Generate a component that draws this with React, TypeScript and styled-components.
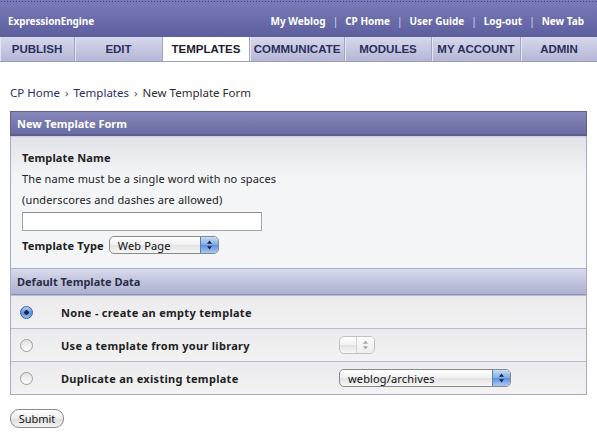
import { Fragment } from "react";
import styled, { createGlobalStyle } from "styled-components";

const GlobalStyle = createGlobalStyle`
  body {
    margin: 0;
    background: #ffffff;
    font-family: "Noto Sans", "DejaVu Sans", sans-serif;
    color: #222222;
  }
`;

const Header = styled.div`
  height: 37px;
  box-sizing: border-box;
  padding-top: 4px;
  background:
    radial-gradient(circle, #3f407a 0.8px, transparent 1px) 0 0 / 3px 3px repeat-x,
    linear-gradient(#7a7bb8, #5d5e9e);
  display: flex;
  align-items: center;
  justify-content: space-between;
  padding-left: 8px;
  padding-right: 13px;
  color: #ffffff;
  font-size: 10px;
  font-weight: bold;
`;

const Brand = styled.div`
  letter-spacing: -0.1px;
`;

const TopLinks = styled.div`
  display: flex;
  gap: 7px;
`;

const TopLink = styled.span`
  color: #ffffff;
`;

const Sep = styled.span`
  color: #d8d9ee;
  font-weight: normal;
`;

const Tabs = styled.div`
  display: flex;
  height: 25px;
  border-bottom: 1px solid #9c9ec0;
  box-sizing: border-box;
`;

const Tab = styled.div<{ $w: number; $active?: boolean }>`
  width: ${(p) => p.$w}px;
  display: flex;
  align-items: center;
  justify-content: center;
  font-family: "Liberation Sans", Arial, sans-serif;
  font-weight: bold;
  font-size: 11.5px;
  color: ${(p) => (p.$active ? "#1c1c2c" : "#2b2e5e")};
  background: ${(p) =>
    p.$active ? "#ffffff" : "linear-gradient(#d6d8ec, #c4c6e0 55%, #b3b6d4)"};
  border-right: 1px solid #a3a5c4;
  box-shadow: ${(p) => (p.$active ? "none" : "inset 1px 0 0 #e4e5f2")};
  box-sizing: border-box;
  &:last-child {
    border-right: none;
  }
`;

const Page = styled.div`
  padding: 0 10px;
`;

const Crumbs = styled.div`
  font-size: 11.5px;
  padding-top: 23px;
  height: 49px;
  box-sizing: border-box;
  color: #2d2d2d;
`;

const Crumb = styled.span`
  color: #2a2e6c;
`;

const Arrow = styled.span`
  margin: 0 5px;
  color: #555555;
`;

const PanelHead = styled.div`
  height: 25px;
  box-sizing: border-box;
  border: 1px solid #5f6193;
  border-bottom: 2px solid #5c5e8f;
  background: linear-gradient(#8688ba, #6a6ca2);
  color: #ffffff;
  font-size: 11px;
  font-weight: bold;
  display: flex;
  align-items: center;
  padding-left: 6px;
`;

const Body = styled.div`
  border: 1px solid #a9abc6;
  border-top: 1px solid #c9cadc;
  background: linear-gradient(#e1e2e7, #f4f5f7 40px, #f4f5f7);
  padding: 10px 11px 14px;
  font-size: 11px;
  letter-spacing: 0.15px;
`;

const Label = styled.div`
  font-weight: bold;
  line-height: 21px;
`;

const Note = styled.div`
  line-height: 21px;
`;

const TextInput = styled.div`
  width: 240px;
  height: 19px;
  box-sizing: border-box;
  margin-top: 2px;
  background: #ffffff;
  border: 1px solid #a5a5a5;
  border-top-color: #8c8c8c;
`;

const TypeRow = styled.div`
  display: flex;
  align-items: center;
  gap: 5px;
  margin-top: 5px;
  font-weight: bold;
`;

const Select = styled.div<{ $w: number; $disabled?: boolean }>`
  width: ${(p) => p.$w}px;
  height: 18px;
  box-sizing: border-box;
  border: 1px solid ${(p) => (p.$disabled ? "#c2c2c2" : "#8a8a8a")};
  border-radius: 5px;
  background: linear-gradient(#ffffff, #f0f0f0 50%, #e2e2e2 51%, #f6f6f6);
  display: flex;
  align-items: center;
  overflow: hidden;
  font-size: 11px;
  font-weight: normal;
  letter-spacing: 0.15px;
  color: #111111;
`;

const SelectText = styled.span`
  flex: 1;
  padding-left: 8px;
`;

const SelectKnob = styled.span<{ $disabled?: boolean }>`
  width: 17px;
  height: 100%;
  display: flex;
  align-items: center;
  justify-content: center;
  border-left: 1px solid ${(p) => (p.$disabled ? "#d2d2d2" : "#5d7fb8")};
  background: ${(p) =>
    p.$disabled
      ? "linear-gradient(#fbfbfb, #eeeeee)"
      : "linear-gradient(#c9dcf6, #7ea9e6 50%, #5e90dc 51%, #a9c9f2)"};
`;

const Section = styled.div`
  border: 1px solid #a9abc6;
  border-top: none;
`;

const SectionHead = styled.div`
  height: 26px;
  box-sizing: border-box;
  border-bottom: 1px solid #8d90b6;
  background: linear-gradient(#d9dbed, #c1c4de 50%, #aeb1d0);
  color: #2b2e45;
  font-size: 11px;
  font-weight: bold;
  display: flex;
  align-items: center;
  padding-left: 6px;
`;

const OptionRow = styled.div`
  display: grid;
  grid-template-columns: 50px 278px 1fr;
  align-items: center;
  height: 33px;
  box-sizing: border-box;
  border-top: 1px solid #babcd2;
  background: linear-gradient(#ebebed, #f2f2f3);
  font-size: 11px;
  font-weight: bold;
  letter-spacing: 0.3px;
  &:first-of-type {
    border-top: none;
  }
`;

const Radio = styled.span<{ $on?: boolean }>`
  justify-self: start;
  width: 13px;
  height: 13px;
  border-radius: 50%;
  box-sizing: border-box;
  border: 1px solid ${(p) => (p.$on ? "#3a5c9a" : "#a0a0a0")};
  background: ${(p) =>
    p.$on
      ? "radial-gradient(circle, #1b2a48 0 2px, transparent 2.5px), linear-gradient(#b7d0f4, #5b8fdb 55%, #9ec3f2)"
      : "linear-gradient(#e2e2e2, #ffffff)"};
  margin-left: 9px;
`;

const Submit = styled.button`
  margin-top: 14px;
  width: 54px;
  height: 19px;
  padding: 0;
  border: 1px solid #8a8a8a;
  border-radius: 9px;
  background: linear-gradient(#ffffff, #ededed 50%, #dcdcdc 51%, #f5f5f5);
  font-family: "Noto Sans", "DejaVu Sans", sans-serif;
  font-size: 11px;
  color: #111111;
`;

const Arrows = ({ disabled }: { disabled?: boolean }) => (
  <svg width="7" height="10" viewBox="0 0 7 10">
    <path d="M3.5 0.5 L6 3.8 H1 Z M3.5 9.5 L6 6.2 H1 Z" fill={disabled ? "#a8a8a8" : "#1a2440"} />
  </svg>
);

const tabs = [
  { label: "PUBLISH", w: 75 },
  { label: "EDIT", w: 88 },
  { label: "TEMPLATES", w: 87, active: true },
  { label: "COMMUNICATE", w: 95 },
  { label: "MODULES", w: 87 },
  { label: "MY ACCOUNT", w: 89 },
  { label: "ADMIN", w: 76 },
];

const links = ["My Weblog", "CP Home", "User Guide", "Log-out", "New Tab"];

export default function App() {
  return (
    <>
      <GlobalStyle />
      <Header>
        <Brand>ExpressionEngine</Brand>
        <TopLinks>
          {links.map((l, i) => (
            <Fragment key={l}>
              {i > 0 && <Sep>|</Sep>}
              <TopLink>{l}</TopLink>
            </Fragment>
          ))}
        </TopLinks>
      </Header>
      <Tabs>
        {tabs.map((t) => (
          <Tab key={t.label} $w={t.w} $active={t.active}>
            {t.label}
          </Tab>
        ))}
      </Tabs>
      <Page>
        <Crumbs>
          <Crumb>CP Home</Crumb>
          <Arrow>›</Arrow>
          <Crumb>Templates</Crumb>
          <Arrow>›</Arrow>
          New Template Form
        </Crumbs>
        <PanelHead>New Template Form</PanelHead>
        <Body>
          <Label>Template Name</Label>
          <Note>The name must be a single word with no spaces</Note>
          <Note>(underscores and dashes are allowed)</Note>
          <TextInput />
          <TypeRow>
            Template Type
            <Select $w={110}>
              <SelectText>Web Page</SelectText>
              <SelectKnob>
                <Arrows />
              </SelectKnob>
            </Select>
          </TypeRow>
        </Body>
        <Section>
          <SectionHead>Default Template Data</SectionHead>
          <OptionRow>
            <Radio $on />
            <span>None - create an empty template</span>
            <span />
          </OptionRow>
          <OptionRow>
            <Radio />
            <span>Use a template from your library</span>
            <Select $w={36} $disabled>
              <SelectText />
              <SelectKnob $disabled>
                <Arrows disabled />
              </SelectKnob>
            </Select>
          </OptionRow>
          <OptionRow>
            <Radio />
            <span>Duplicate an existing template</span>
            <Select $w={172}>
              <SelectText>weblog/archives</SelectText>
              <SelectKnob>
                <Arrows />
              </SelectKnob>
            </Select>
          </OptionRow>
        </Section>
        <Submit>Submit</Submit>
      </Page>
    </>
  );
}
